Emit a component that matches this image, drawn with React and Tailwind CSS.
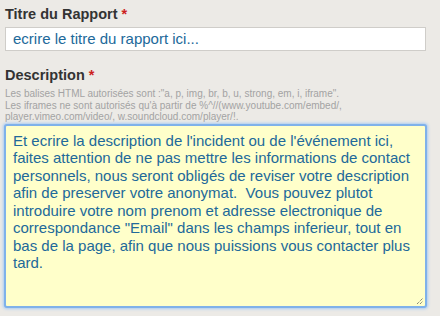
export default function App() {
  return (
    <div className="h-[316px] w-[440px] overflow-hidden bg-[#eceae6] pl-[5px] pt-[6px] font-['Liberation_Sans',Arial,sans-serif]">
      <label className="block text-[14.5px] font-bold leading-[16px] text-[#333]">
        Titre du Rapport <span className="text-[#cc1f1f]">*</span>
      </label>
      <div className="mt-[5px] flex h-[24px] w-[421px] items-center border border-[#cfcdc9] bg-white px-[7px] text-[15px] text-[#21699a]">
        ecrire le titre du rapport ici...
      </div>

      <label className="mt-[16px] block text-[14.5px] font-bold leading-[16px] text-[#333]">
        Description <span className="text-[#cc1f1f]">*</span>
      </label>
      <div className="mt-[5px] text-[10px] leading-[11.5px] text-[#a3a3a3]">
        <p>Les balises HTML autorisées sont :"a, p, img, br, b, u, strong, em, i, iframe".</p>
        <p>Les iframes ne sont autorisés qu'à partir de %^//(www.youtube.com/embed/,</p>
        <p>player.vimeo.com/video/, w.soundcloud.com/player/!.</p>
      </div>
      <div className="relative ml-[-1px] mt-[1px] h-[184px] w-[423px] rounded-[3px] border-2 border-[#7fb1ea] bg-[#ffffca] px-[7px] pt-[6px] text-[15px] leading-[17.5px] text-[#21699a] shadow-[0_0_3px_1px_#a9cbf3]">
        <p>
          Et ecrire la description de l'incident ou de l'événement ici, faites attention de ne pas mettre les
          informations de contact personnels, nous seront obligés de reviser votre description afin de preserver
          votre anonymat.&nbsp; Vous pouvez plutot introduire votre nom prenom et adresse electronique de
          correspondance "Email" dans les champs inferieur, tout en bas de la page, afin que nous puissions vous
          contacter plus tard.
        </p>
        <svg className="absolute bottom-[1px] right-[1px]" width="8" height="8" viewBox="0 0 8 8">
          <path d="M1 7 L7 1 M4 7 L7 4" stroke="#555" strokeWidth="1" strokeDasharray="1 1" />
        </svg>
      </div>
    </div>
  )
}
